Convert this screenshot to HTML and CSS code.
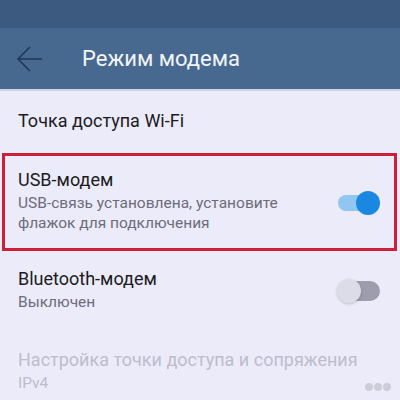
FILE: index.html
```html
<!DOCTYPE html>
<html lang="ru">

<head>
    <meta charset="UTF-8">
    <meta name="viewport" content="width=device-width, initial-scale=1.0">
    <title>Режим модема</title>
    <link rel="stylesheet" href="styles.css">
</head>

<body>
    <div class="status-bar"></div>

    <header class="app-bar">
        <svg class="back" width="28" height="28" viewBox="0 0 28 28">
            <path d="M26 14H2M14 2L2 14l12 12" fill="none" stroke="#1e3653" stroke-width="1.5" />
        </svg>
        <h1>Режим модема</h1>
    </header>

    <div class="list">
        <div class="item wifi">
            <div class="item-title">Точка доступа Wi-Fi</div>
        </div>

        <div class="item usb">
            <div class="item-text">
                <div class="item-title">USB-модем</div>
                <div class="item-sub">USB-связь установлена, установите флажок для подключения</div>
            </div>
            <div class="switch on"><span class="thumb"></span></div>
        </div>

        <div class="item bt">
            <div class="item-text">
                <div class="item-title">Bluetooth-модем</div>
                <div class="item-sub">Выключен</div>
            </div>
            <div class="switch off"><span class="thumb"></span></div>
        </div>

        <div class="item disabled">
            <div class="item-text">
                <div class="item-title">Настройка точки доступа и сопряжения</div>
                <div class="item-sub">IPv4</div>
            </div>
        </div>
    </div>

    <div class="mark"><span></span><span></span><span></span></div>
</body>

</html>
```

FILE: styles.css
```css
body {
    font-family: Roboto, "Noto Sans", sans-serif;
    background-color: #ecebfa;
    margin: 0;
    width: 400px;
    height: 400px;
    overflow: hidden;
    position: relative;
}

.status-bar {
    height: 28px;
    background-color: #3c5a7f;
}

.app-bar {
    height: 61px;
    display: flex;
    align-items: center;
    padding-left: 16px;
    background-color: #48698f;
    border-bottom: 2px solid #cfd5e6;
}

.back {
    display: block;
    margin-top: 1px;
}

.app-bar h1 {
    margin: 0 0 0 38px;
    font-size: 22px;
    font-weight: 400;
    color: #f2f5fb;
    line-height: 26px;
}

.item {
    display: flex;
    align-items: center;
    padding: 0 18px;
}

.item-text {
    flex: 1;
}

.item-title {
    font-size: 18px;
    line-height: 22px;
    color: #1b1b24;
}

.item-sub {
    margin-top: 2px;
    font-size: 15.5px;
    line-height: 20px;
    color: #6c6c7c;
    max-width: 275px;
}

.wifi {
    padding-top: 19px;
    padding-bottom: 21px;
}

.usb {
    margin: 0 3px 0 2px;
    padding: 13px 17px 15px 13px;
    border: 3px solid #cc2038;
}

.bt {
    margin-top: 17px;
}

.disabled {
    margin-top: 37px;
}

.disabled .item-title,
.disabled .item-sub {
    color: #bdbdcc;
}

.switch {
    position: relative;
    width: 36px;
    height: 16px;
    border-radius: 8px;
    margin-top: 4px;
}

.switch .thumb {
    position: absolute;
    top: -4px;
    width: 24px;
    height: 24px;
    border-radius: 50%;
}

.switch.on {
    background-color: #8fc6f2;
    margin-right: 3px;
}

.switch.on .thumb {
    right: -6px;
    background-color: #1a87e1;
}

.switch.off {
    background-color: #9d9dad;
    height: 20px;
    border-radius: 10px;
    width: 42px;
    margin-right: 2px;
    margin-top: 2px;
}

.switch.off .thumb {
    left: -1px;
    top: -2px;
    background-color: #dcdce8;
    box-shadow: 0 1px 3px rgba(0, 0, 0, 0.2);
}

.mark {
    position: absolute;
    right: 9px;
    bottom: 9px;
    display: flex;
    gap: 1px;
}

.mark span {
    width: 8px;
    height: 8px;
    border-radius: 50%;
    background-color: #cdcdda;
}
```
